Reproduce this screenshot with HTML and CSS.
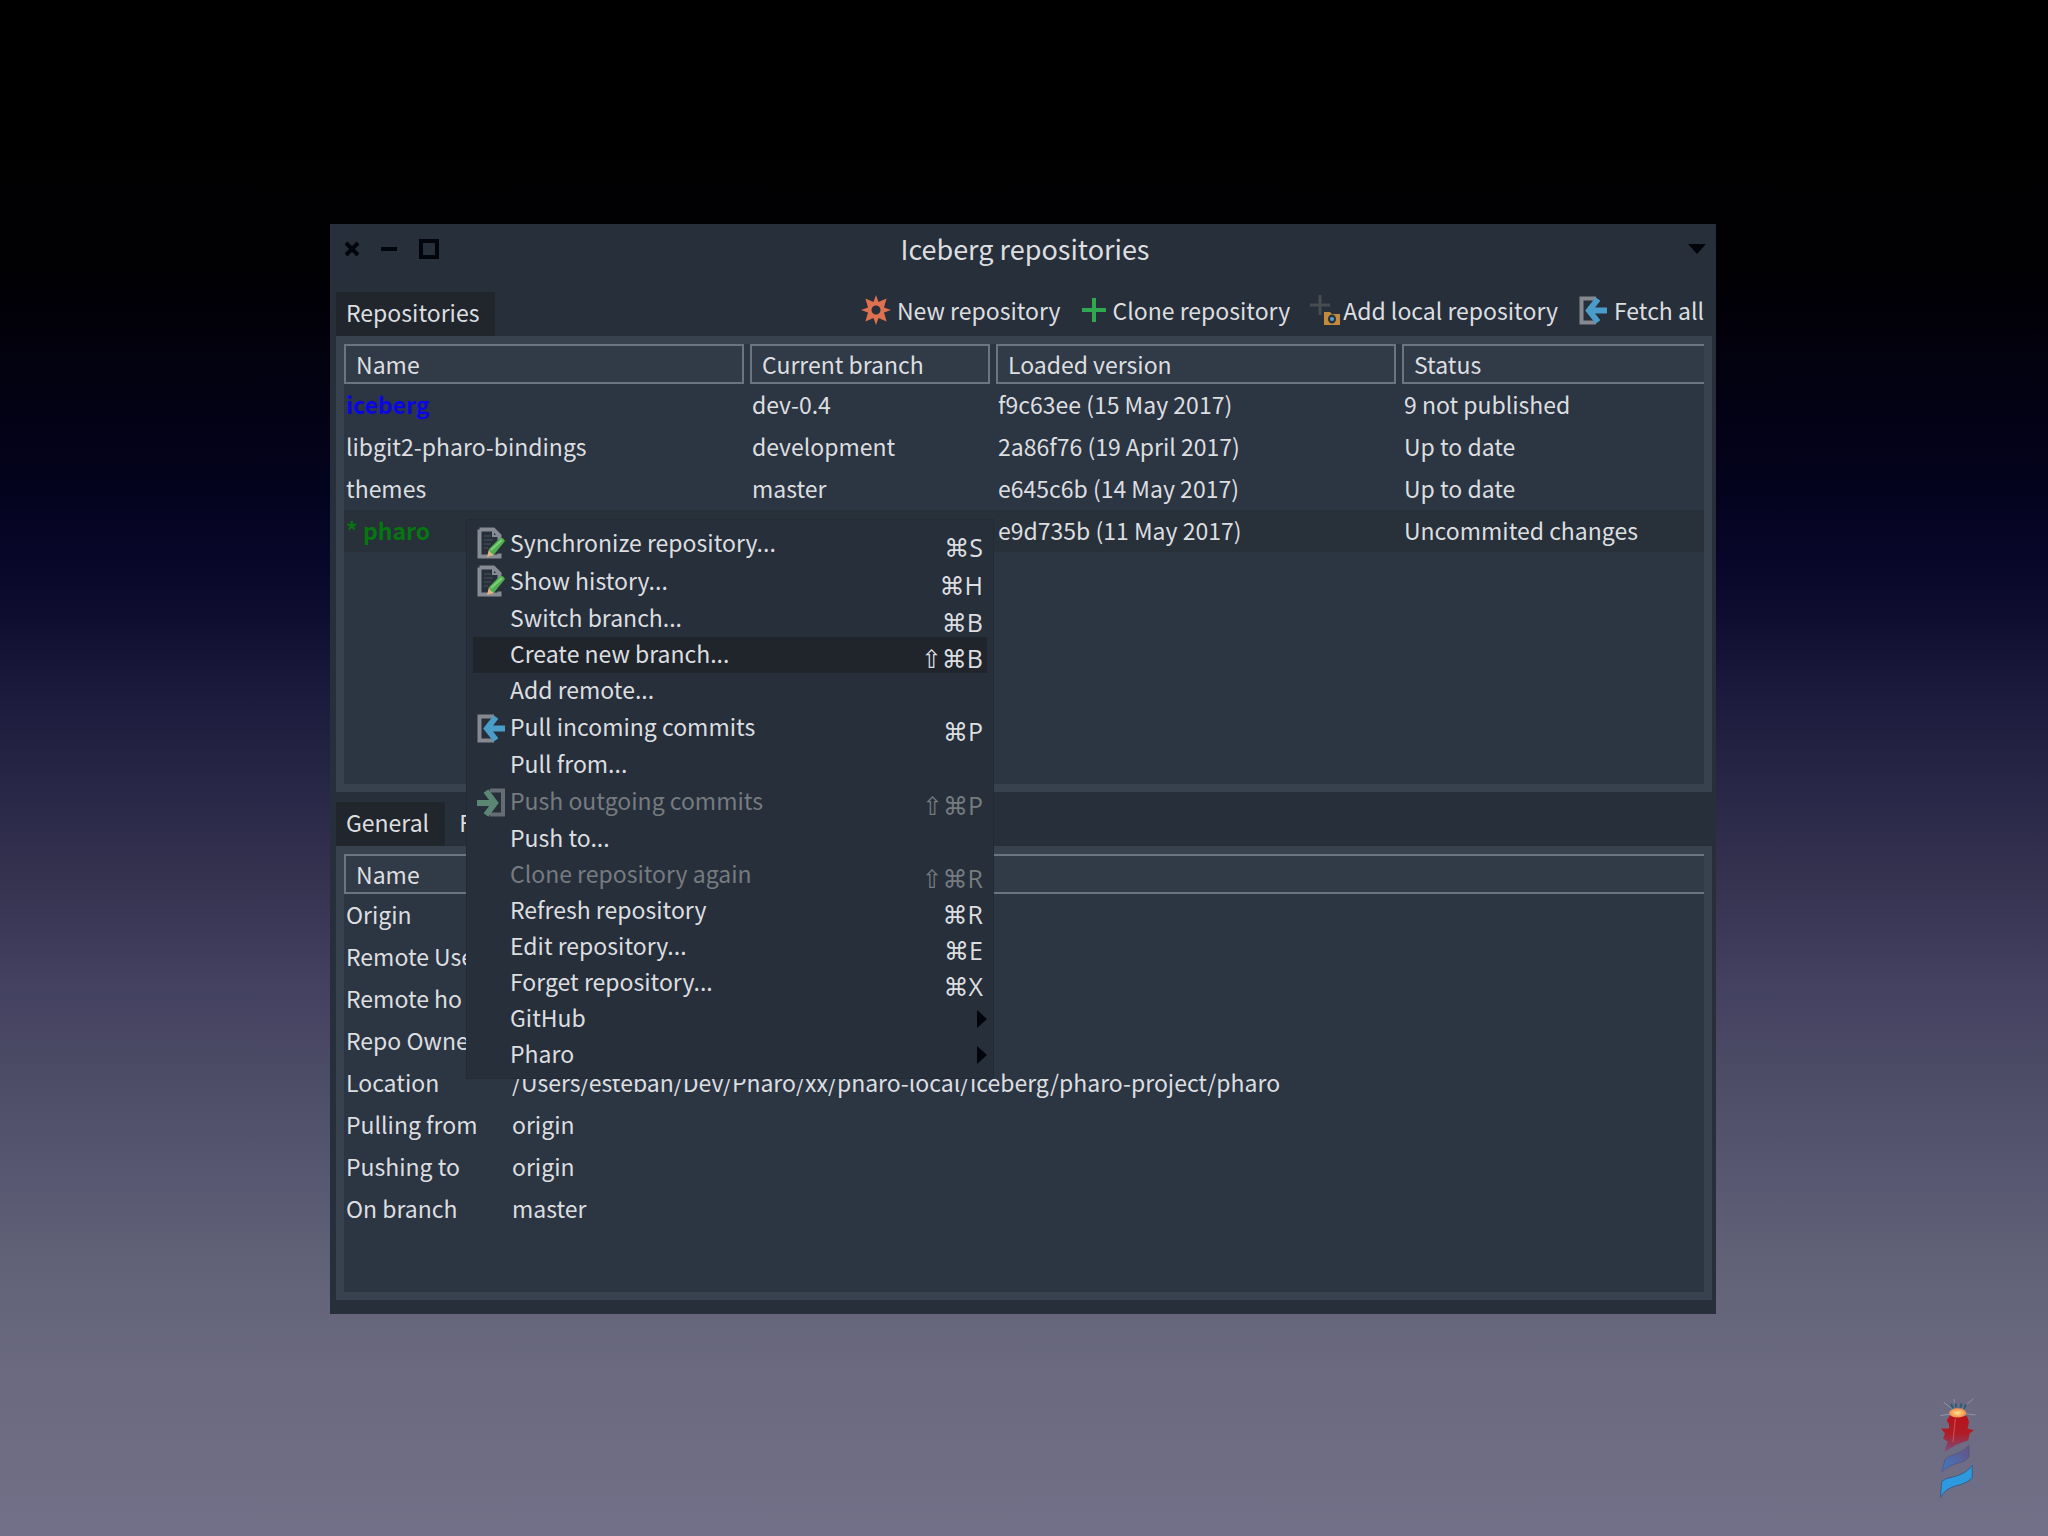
FILE: index.html
```html
<!DOCTYPE html>
<html lang="en">
<head>
  <meta charset="UTF-8">
  <meta name="viewport" content="width=device-width, initial-scale=1.0">
  <title>Iceberg repositories</title>
  <link rel="stylesheet" href="styles.css">
</head>
<body>
  <!-- shared icons -->
  <svg class="defs" width="0" height="0" aria-hidden="true">
    <symbol id="icon-pull" viewBox="0 0 30 30">
      <path d="M18 3.500H3.500v24H18" fill="none" stroke="#85888f" stroke-width="4"/>
      <path d="M29 15.500H12M20 4l-9 11.500 9 11.500" fill="none" stroke="#4a9cc9" stroke-width="6"/>
    </symbol>
    <symbol id="icon-push" viewBox="0 0 30 30">
      <path d="M14 3.500h13v24H14" fill="none" stroke="#666c74" stroke-width="4"/>
      <path d="M1 16h17M10 4l9 12-9 12" fill="none" stroke="#5b8673" stroke-width="6"/>
    </symbol>
    <symbol id="icon-edit" viewBox="0 0 30 34">
      <path d="M3.500 2.500h14l6 6v6M3.500 2.500v27h20v-3" fill="none" stroke="#868b94" stroke-width="4"/>
      <path d="M17 2v7h7" fill="none" stroke="#868b94" stroke-width="2"/>
      <path d="M8 9h7M8 13h9M8 17h7M8 21h4" stroke="#4b535d" stroke-width="1"/>
      <path d="M11 30l2-8 5 6z" fill="#e0b581"/>
      <path d="M13 22L24 11q3-1 5 3L18 27.500q-4-1-5-5.500z" fill="#4fae50"/>
      <path d="M15 23L26 13" stroke="#7fd077" stroke-width="2"/>
    </symbol>
  </svg>

  <main class="window">
    <header class="titlebar">
      <div class="window-buttons">
        <button aria-label="Close"><svg width="16" height="16" viewBox="0 0 16 16"><path d="M2 2l12 12M14 2L2 14" stroke="#02050c" stroke-width="4"/></svg></button>
        <button aria-label="Minimize"><svg width="18" height="16" viewBox="0 0 18 16"><path d="M1 8h16" stroke="#02050c" stroke-width="4"/></svg></button>
        <button aria-label="Maximize"><svg width="22" height="22" viewBox="0 0 22 22"><path d="M3 3h16v16H3z" fill="none" stroke="#02050c" stroke-width="4"/></svg></button>
      </div>
      <h1>Iceberg repositories</h1>
      <button class="window-menu" aria-label="Window menu"><svg width="18" height="10" viewBox="0 0 18 10"><path d="M0 0h18L9 10z" fill="#02050c"/></svg></button>
    </header>

    <div class="bar">
      <button class="tab active">Repositories</button>
      <div class="toolbar">
        <button>
          <svg width="30" height="30" viewBox="0 0 30 30"><path fill="#dd7150" fill-rule="evenodd" d="M15 0l2.500 7L25.600 3.400 23 12.500 30 15l-7 2.500 2.600 9.100-8.100-3.600L15 30l-2.500-7-8.100 3.600L7 17.500 0 15l7-2.500L4.400 3.400l8.100 3.600zM15 10.500a4.500 4.500 0 1 0 0 9 4.500 4.500 0 1 0 0-9z"/></svg>
          New repository
        </button>
        <button>
          <svg width="26" height="26" viewBox="0 0 26 26"><path d="M13 1v24M1 13h24" stroke="#2fa84f" stroke-width="4"/></svg>
          Clone repository
        </button>
        <button class="tight">
          <svg width="30" height="32" viewBox="0 0 30 32"><path d="M10 1v20M0 11h20" stroke="#474d50" stroke-width="3"/><path d="M14 18h6l2 2h8v11H14z" fill="#c28a3c"/><path d="M22 20.500a4 4.500 0 1 0 0 9 4 4.500 0 1 0 0-9z" fill="#26323e"/><circle cx="22" cy="25" r="2" fill="#5aa0c8"/></svg>
          Add local repository
        </button>
        <button>
          <svg width="30" height="30"><use href="#icon-pull"/></svg>
          Fetch all
        </button>
      </div>
    </div>

    <section class="panel repositories">
      <table>
        <colgroup><col class="wide"><col class="medium"><col class="wide"><col></colgroup>
        <thead>
          <tr><th><span>Name</span></th><th><span>Current branch</span></th><th><span>Loaded version</span></th><th><span>Status</span></th></tr>
        </thead>
        <tbody>
          <tr><td class="current">iceberg</td><td>dev-0.4</td><td>f9c63ee (15 May 2017)</td><td>9 not published</td></tr>
          <tr><td>libgit2-pharo-bindings</td><td>development</td><td>2a86f76 (19 April 2017)</td><td>Up to date</td></tr>
          <tr><td>themes</td><td>master</td><td>e645c6b (14 May 2017)</td><td>Up to date</td></tr>
          <tr class="selected"><td class="modified">* pharo</td><td></td><td>e9d735b (11 May 2017)</td><td>Uncommited changes</td></tr>
        </tbody>
      </table>
    </section>

    <div class="bar details-bar">
      <button class="tab active">General</button>
      <button class="tab">F</button>
    </div>

    <section class="panel details">
      <table>
        <colgroup><col class="narrow"><col></colgroup>
        <thead>
          <tr><th><span>Name</span></th><th><span></span></th></tr>
        </thead>
        <tbody>
          <tr><td>Origin</td><td></td></tr>
          <tr><td>Remote Use</td><td></td></tr>
          <tr><td>Remote ho</td><td></td></tr>
          <tr><td>Repo Owne</td><td></td></tr>
          <tr><td>Location</td><td>/Users/esteban/Dev/Pharo/xx/pharo-local/iceberg/pharo-project/pharo</td></tr>
          <tr><td>Pulling from</td><td>origin</td></tr>
          <tr><td>Pushing to</td><td>origin</td></tr>
          <tr><td>On branch</td><td>master</td></tr>
        </tbody>
      </table>
    </section>

    <div class="menu" role="menu">
      <button role="menuitem" class="with-icon"><svg width="30" height="34"><use href="#icon-edit"/></svg><span>Synchronize repository...</span><kbd>⌘S</kbd></button>
      <button role="menuitem" class="with-icon"><svg width="30" height="34"><use href="#icon-edit"/></svg><span>Show history...</span><kbd>⌘H</kbd></button>
      <button role="menuitem"><span>Switch branch...</span><kbd>⌘B</kbd></button>
      <button role="menuitem" class="highlighted"><span>Create new branch...</span><kbd>⇧⌘B</kbd></button>
      <button role="menuitem"><span>Add remote...</span></button>
      <button role="menuitem" class="with-icon"><svg width="30" height="30"><use href="#icon-pull"/></svg><span>Pull incoming commits</span><kbd>⌘P</kbd></button>
      <button role="menuitem"><span>Pull from...</span></button>
      <button role="menuitem" class="with-icon" disabled><svg width="30" height="30"><use href="#icon-push"/></svg><span>Push outgoing commits</span><kbd>⇧⌘P</kbd></button>
      <button role="menuitem"><span>Push to...</span></button>
      <button role="menuitem" disabled><span>Clone repository again</span><kbd>⇧⌘R</kbd></button>
      <button role="menuitem"><span>Refresh repository</span><kbd>⌘R</kbd></button>
      <button role="menuitem"><span>Edit repository...</span><kbd>⌘E</kbd></button>
      <button role="menuitem"><span>Forget repository...</span><kbd>⌘X</kbd></button>
      <button role="menuitem" aria-haspopup="true"><span>GitHub</span><svg class="arrow" width="10" height="18" viewBox="0 0 10 18"><path d="M0 0l10 9-10 9z" fill="#02050c"/></svg></button>
      <button role="menuitem" aria-haspopup="true"><span>Pharo</span><svg class="arrow" width="10" height="18" viewBox="0 0 10 18"><path d="M0 0l10 9-10 9z" fill="#02050c"/></svg></button>
    </div>
  </main>

  <!-- lighthouse logo -->
  <svg class="logo" width="40" height="103" viewBox="110 50 120 310">
    <defs>
      <linearGradient id="tower" x1="0" y1="0" x2="0" y2="1"><stop offset="0" stop-color="#b8121a"/><stop offset=".5" stop-color="#b01c26"/><stop offset="1" stop-color="#775080"/></linearGradient>
      <linearGradient id="band" x1="0" y1="1" x2="1" y2="0"><stop offset="0" stop-color="#3d7cc4"/><stop offset="1" stop-color="#6a5082"/></linearGradient>
      <radialGradient id="lamp"><stop offset="0" stop-color="#ffe08a"/><stop offset="1" stop-color="#f08a4a"/></radialGradient>
    </defs>
    <path d="M172 98L130 66M172 98L120 106M172 98L160 56M172 98L220 54M172 98L226 104" stroke="#a3a6bc" stroke-width="2"/>
    <path d="M158 84l-6-13M168 82l-3-13M180 82l4-13M190 86l8-14" stroke="#2e5d78" stroke-width="6"/>
    <path d="M150 105l-11 15 7 12v13h-24l12 15-6 15 14 10-10 30q18-10 38-22 20-8 34-13l4-20 12-10-18-5 4-20-6-17z" fill="url(#tower)"/>
    <path d="M165 115l-7 70" stroke="#c9565c" stroke-width="3"/>
    <ellipse cx="172" cy="98" rx="26" ry="14" fill="url(#lamp)"/>
    <path d="M206 195v35q-6 12-36 20-30 8-46 26l10-38q8-10 31-16 25-8 41-27z" fill="url(#band)" stroke="#4f5080" stroke-width="2"/>
    <path d="M216 255v37q-11 16-51 26-30 8-45 34l4-48q11-10 36-14 40-10 56-35z" fill="#2d9ae0" stroke="#3b5c85" stroke-width="3"/>
  </svg>
</body>
</html>
```
FILE: styles.css
```css
* {
  box-sizing: border-box;
}
body {
  display: flex;
  min-height: 100vh;
  margin: 0;
  padding: 224px 332px 222px 330px;
  font-family: "Noto Sans CJK SC", "Noto Sans", sans-serif;
  font-size: 23px;
  line-height: 36px;
  color: #dcdee0;
  background: linear-gradient(#000 0%, #010002 17%, #02010c 22%, #04031e 32%, #070628 36%, #0e0d30 40%, #1b1a3c 45%, #282646 51%, #353250 57%, #434060 64%, #4d4c66 70%, #585872 77%, #626278 83%, #6a6980 89%, #717088 100%);
}
button {
  margin: 0;
  padding: 0;
  border: none;
  background: none;
  font: inherit;
  color: inherit;
  white-space: nowrap;
}
.defs {
  position: absolute;
}
.window {
  position: relative;
  flex: 1;
  display: flex;
  flex-direction: column;
  padding: 0 4px 14px 6px;
  background-color: #272f3a;
}
.titlebar {
  display: grid;
  grid-template-columns: 1fr auto 1fr;
  align-items: center;
  height: 50px;
  padding: 0 6px 0 8px;
}
.titlebar h1 {
  margin: 0;
  font-size: 27px;
  font-weight: normal;
}
.window-buttons {
  display: flex;
  align-items: center;
  gap: 20px;
}
.window-buttons svg,
.window-menu svg {
  display: block;
}
.window-menu {
  justify-self: end;
}

/* tabs and toolbar */
.bar {
  display: flex;
  justify-content: space-between;
  align-items: flex-end;
  height: 62px;
}
.details-bar {
  justify-content: flex-start;
  gap: 4px;
  height: 54px;
}
.tab {
  height: 44px;
  padding: 0 16px 4px 10px;
}
.tab.active {
  background-color: #20262c;
}
.toolbar {
  display: flex;
  gap: 20px;
  padding: 0 8px 8px 0;
}
.toolbar button {
  display: flex;
  align-items: center;
  gap: 6px;
}
.toolbar .tight {
  gap: 3px;
}

/* list panels */
.panel {
  border: 8px solid #38424e;
  background-color: #2c3542;
}
.repositories {
  height: 456px;
}
.details {
  flex: 1;
}
table {
  width: 100%;
  border-spacing: 0;
  table-layout: fixed;
}
.wide {
  width: 406px;
}
.medium {
  width: 246px;
}
.narrow {
  width: 166px;
}
th {
  padding: 0 6px 0 0;
  font-weight: normal;
  text-align: left;
}
th:last-child {
  padding-right: 0;
}
th span {
  display: block;
  height: 40px;
  padding: 0 10px;
  border: 2px solid #6b7582;
  background-color: #313a47;
}
th:last-child span {
  border-right: none;
}
td {
  height: 42px;
  padding: 0 2px 2px;
  white-space: nowrap;
}
.current {
  color: #0a06e6;
  font-weight: bold;
}
.modified {
  color: #067610;
  font-weight: bold;
}
.selected {
  background-color: #28303a;
}

/* context menu */
.menu {
  position: absolute;
  top: 295px;
  left: 136px;
  width: 528px;
  padding: 5px 6px;
  border: 1px solid #222a35;
  background-color: #272f3b;
}
.menu button {
  display: flex;
  align-items: center;
  width: 100%;
  height: 36px;
  padding-left: 37px;
}
.menu .with-icon {
  height: 38px;
  padding-left: 3px;
  gap: 4px;
}
.menu .highlighted {
  background-color: #20252c;
}
.menu button:disabled {
  color: #767b80;
}
.menu span {
  padding-bottom: 4px;
}
.menu kbd {
  margin: 0 4px 0 auto;
  padding-top: 6px;
  font-family: "Open Sans", "DejaVu Sans", sans-serif;
  font-size: 25px;
}
.menu .arrow {
  margin-left: auto;
}

.logo {
  position: absolute;
  right: 71px;
  bottom: 36px;
}
```
